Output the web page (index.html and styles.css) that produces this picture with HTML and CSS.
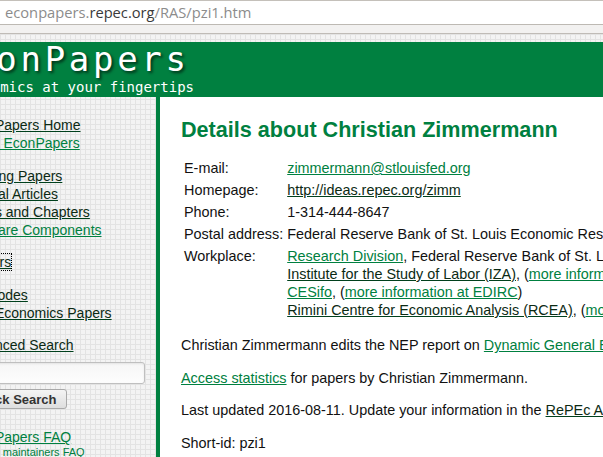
FILE: index.html
```html
<!DOCTYPE html>
<html lang="en">

<head>
    <meta charset="UTF-8">
    <title>EconPapers: Christian Zimmermann</title>
    <link rel="stylesheet" href="styles.css">
</head>

<body>
    <div class="chrome">
        <div class="urlbar">
            <span class="url-dim">econpapers.</span><span class="url-host">repec.org</span><span class="url-dim">/RAS/pzi1.htm</span>
        </div>
        <div class="tabstrip"></div>
    </div>

    <div class="page">
        <div class="header">
            <div class="logo">EconPapers</div>
            <div class="tagline">Economics at your fingertips</div>
        </div>

        <div class="main">
            <div class="sidebar">
                <ul class="menu">
                    <li><a class="seen" href="#">EconPapers Home</a></li>
                    <li><a href="#">About EconPapers</a></li>
                </ul>
                <ul class="menu gap-s">
                    <li><a class="seen" href="#">Working Papers</a></li>
                    <li><a class="seen" href="#">Journal Articles</a></li>
                    <li><a class="seen" href="#">Books and Chapters</a></li>
                    <li><a href="#">Software Components</a></li>
                </ul>
                <ul class="menu gap-l">
                    <li><a class="seen focus" href="#">Authors</a></li>
                </ul>
                <ul class="menu gap-s">
                    <li><a class="seen" href="#">JEL codes</a></li>
                    <li><a class="seen" href="#">New Economics Papers</a></li>
                </ul>
                <ul class="menu gap-l">
                    <li><a class="seen" href="#">Advanced Search</a></li>
                </ul>
                <form class="search">
                    <input class="search-box" type="text">
                    <button class="search-btn" type="button">Quick Search</button>
                </form>
                <ul class="menu faq">
                    <li><a href="#">EconPapers FAQ</a></li>
                    <li class="small"><a href="#">Archive maintainers FAQ</a></li>
                </ul>
            </div>

            <div class="content">
                <h1>Details about Christian Zimmermann</h1>
                <table class="details">
                    <tr>
                        <td>E-mail:</td>
                        <td><a href="#">zimmermann@stlouisfed.org</a></td>
                    </tr>
                    <tr>
                        <td>Homepage:</td>
                        <td><a class="seen" href="#">http://ideas.repec.org/zimm</a></td>
                    </tr>
                    <tr>
                        <td>Phone:</td>
                        <td>1-314-444-8647</td>
                    </tr>
                    <tr>
                        <td>Postal address:</td>
                        <td>Federal Reserve Bank of St. Louis Economic Research, P.O. Box 442, St. Louis MO 63166-0442</td>
                    </tr>
                    <tr>
                        <td>Workplace:</td>
                        <td>
                            <a href="#">Research Division</a>, Federal Reserve Bank of St. Louis, (<a href="#">more information at EDIRC</a>)<br>
                            <a class="seen" href="#">Institute for the Study of Labor (IZA)</a>, (<a href="#">more information at EDIRC</a>)<br>
                            <a href="#">CESifo</a>, (<a href="#">more information at EDIRC</a>)<br>
                            <a class="seen" href="#">Rimini Centre for Economic Analysis (RCEA)</a>, (<a href="#">more information at EDIRC</a>)
                        </td>
                    </tr>
                </table>

                <p>Christian Zimmermann edits the NEP report on <a href="#">Dynamic General Equilibrium</a> (nep-dge).</p>
                <p><a href="#">Access statistics</a> for papers by Christian Zimmermann.</p>
                <p>Last updated 2016-08-11. Update your information in the <a class="seen" href="#">RePEc Author Service</a>.</p>
                <p>Short-id: pzi1</p>
            </div>
        </div>
    </div>
</body>

</html>
```

FILE: styles.css
```css
* {
    margin: 0;
    padding: 0;
    box-sizing: border-box;
}

html,
body {
    overflow: hidden;
    height: 100%;
}

body {
    font-family: "Liberation Sans", Arial, sans-serif;
    color: #111;
    background: #f2f1f0;
}

/* browser address bar */
.chrome {
    height: 34px;
    border-top: 1px solid #c4c0ba;
}

.urlbar {
    height: 24px;
    background: #fff;
    border-bottom: 1px solid #bdb9b3;
    padding-left: 5px;
    font-family: "Open Sans", "DejaVu Sans", sans-serif;
    font-size: 14.7px;
    line-height: 23px;
    color: #8c8c8c;
}

.url-host {
    color: #3a3a3a;
}

.tabstrip {
    height: 9px;
    background: #f2f1f0;
    border-bottom: 1px solid #bfbbb6;
}

/* page */
.page {
    width: 1100px;
    margin-left: -50px;
    padding-top: 8px;
    background-color: #f3f3f3;
    background-image:
        linear-gradient(#e3e3e3 1px, transparent 1px),
        linear-gradient(90deg, #e3e3e3 1px, transparent 1px);
    background-size: 5px 5px;
    height: 2000px;
}

a {
    color: #008040;
    text-decoration: underline;
}

a.seen {
    color: #0c2a14;
    text-decoration-color: #00401c;
}

.header {
    background: #008040;
    height: 55px;
    color: #fff;
    font-family: "DejaVu Sans Mono", monospace;
}

.logo {
    margin-left: -2px;
    padding-top: 1px;
    font-size: 34px;
    line-height: 32px;
    letter-spacing: 3.7px;
    text-shadow: 2px 2px 3px rgba(0, 0, 0, 0.6);
}

.tagline {
    margin-top: 4px;
    padding-left: 8px;
    font-size: 14px;
    line-height: 16px;
}

.main {
    display: flex;
    align-items: flex-start;
}

/* left menu */
.sidebar {
    width: 206px;
    flex-shrink: 0;
    padding: 19px 0 0 13px;
    font-size: 14px;
}

.menu {
    list-style: none;
    line-height: 18px;
}

.gap-s {
    margin-top: 15px;
}

.gap-l {
    margin-top: 14px;
}

a.focus {
    outline: 1px dotted #000;
    outline-offset: 0;
}

.search {
    display: flex;
    flex-direction: column;
    align-items: flex-start;
    margin-top: 8px;
}

.search-box {
    width: 182px;
    height: 22px;
    border: 1px solid #bfbfbf;
    border-radius: 3px;
    background: linear-gradient(#f6f6f6, #fdfdfd);
    box-shadow: inset 0 1px 2px rgba(0, 0, 0, 0.08);
}

.search-btn {
    margin-top: 5px;
    width: 104px;
    height: 20px;
    border: 1px solid #a9a9a9;
    border-radius: 3px;
    background: linear-gradient(#f4f4f4, #dedede);
    font-family: "Liberation Sans", Arial, sans-serif;
    font-size: 13px;
    font-weight: bold;
    color: #333;
}

.faq {
    margin-top: 19px;
}

.faq .small {
    font-size: 11px;
    line-height: 12px;
}

/* main column */
.content {
    flex: 1;
    min-height: 2000px;
    background: #fff;
    border-left: 4px solid #008040;
    padding: 20px 0 0 21px;
    font-size: 14.4px;
    white-space: nowrap;
}

.content h1 {
    color: #008040;
    font-size: 21.6px;
    line-height: 25px;
    margin-bottom: 14px;
}

.details {
    border-spacing: 2px;
    font-size: 14.4px;
}

.details td {
    padding: 1px;
    line-height: 18px;
    vertical-align: top;
}

.content p {
    line-height: 18px;
    margin-top: 14.4px;
}
```
